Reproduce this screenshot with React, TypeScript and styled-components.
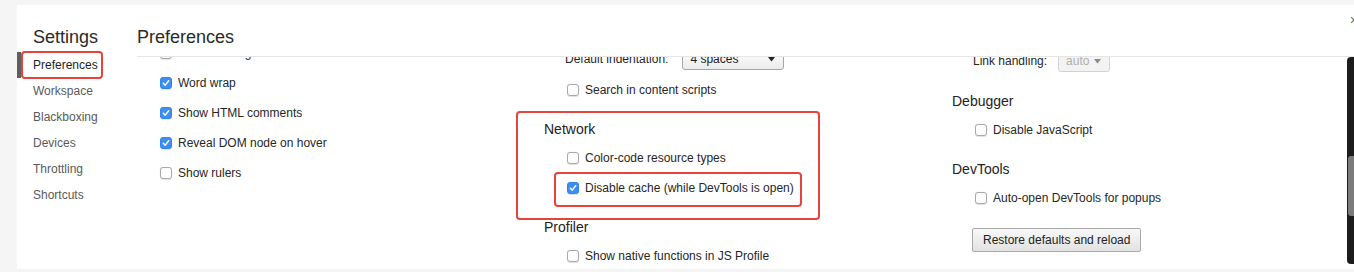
import React from "react";
import styled, { createGlobalStyle, css } from "styled-components";

const GlobalStyle = createGlobalStyle`
  html, body {
    margin: 0;
    padding: 0;
    background: #f5f5f5;
  }
  * {
    box-sizing: border-box;
  }
`;

const SIDEBAR_ITEMS = [
  "Preferences",
  "Workspace",
  "Blackboxing",
  "Devices",
  "Throttling",
  "Shortcuts",
];

type Box = { $top: number; $left: number; $width: number; $height: number };

const Checkbox = ({ checked }: { checked?: boolean }) => (
  <StyledCheck $checked={!!checked}>
    {checked && (
      <svg width="8" height="8" viewBox="0 0 8 8">
        <path
          d="M1.3 4.3 L3.2 6.1 L6.7 1.8"
          fill="none"
          stroke="#fff"
          strokeWidth="1.5"
          strokeLinecap="round"
          strokeLinejoin="round"
        />
      </svg>
    )}
  </StyledCheck>
);

const Option = ({ label, checked }: { label: string; checked?: boolean }) => (
  <StyledRow>
    <Checkbox checked={checked} />
    <span>{label}</span>
  </StyledRow>
);

const Caret = ({ color }: { color: string }) => (
  <svg width="7" height="5" viewBox="0 0 7 5">
    <path d="M0 0 L7 0 L3.5 4.5 Z" fill={color} />
  </svg>
);

const App = () => {
  return (
    <>
      <GlobalStyle />
      <StyledPage>
        <StyledPanel>
          <StyledSidebar>
            <StyledTitle>Settings</StyledTitle>
            <StyledNav>
              {SIDEBAR_ITEMS.map((item, i) => (
                <StyledNavItem key={item} $selected={i === 0}>
                  {item}
                  {i === 0 && (
                    <StyledMark $top={-1} $left={4} $width={82} $height={28} />
                  )}
                </StyledNavItem>
              ))}
            </StyledNav>
          </StyledSidebar>

          <StyledMain>
            <StyledHeader>Preferences</StyledHeader>
            <StyledContent>
              <StyledColumns>
                {/* columns are scrolled: the rows above are cut off */}
                <StyledColumn $shift={-19}>
                  <Option label="Show user agent shadow DOM" />
                  <Option label="Word wrap" checked />
                  <Option label="Show HTML comments" checked />
                  <Option label="Reveal DOM node on hover" checked />
                  <Option label="Show rulers" />
                </StyledColumn>

                <StyledColumn $shift={-14}>
                  <StyledSelectRow>
                    <StyledLabel $gap={14}>Default indentation:</StyledLabel>
                    <StyledSelect $width={102}>
                      4 spaces
                      <Caret color="#222" />
                    </StyledSelect>
                  </StyledSelectRow>
                  <Option label="Search in content scripts" />
                  <StyledSection>
                    <StyledSectionTitle>Network</StyledSectionTitle>
                    <Option label="Color-code resource types" />
                    <StyledMarked>
                      <Option label="Disable cache (while DevTools is open)" checked />
                      <StyledMark $top={-1} $left={10} $width={248} $height={35} />
                    </StyledMarked>
                    <StyledMark $top={-4} $left={-28} $width={304} $height={109} />
                  </StyledSection>
                  <StyledSection>
                    <StyledSectionTitle>Profiler</StyledSectionTitle>
                    <Option label="Show native functions in JS Profile" />
                  </StyledSection>
                </StyledColumn>

                <StyledColumn $shift={-12}>
                  <StyledSelectRow>
                    <StyledLabel $gap={11}>Link handling:</StyledLabel>
                    <StyledSelect $width={52} $disabled>
                      auto
                      <Caret color="#8a8a8a" />
                    </StyledSelect>
                  </StyledSelectRow>
                  <StyledSection>
                    <StyledSectionTitle>Debugger</StyledSectionTitle>
                    <Option label="Disable JavaScript" />
                  </StyledSection>
                  <StyledSection>
                    <StyledSectionTitle>DevTools</StyledSectionTitle>
                    <Option label="Auto-open DevTools for popups" />
                  </StyledSection>
                  <StyledButton>Restore defaults and reload</StyledButton>
                </StyledColumn>
              </StyledColumns>

              <StyledScrollbar>
                <StyledThumb />
              </StyledScrollbar>
            </StyledContent>
          </StyledMain>

          <StyledClose>×</StyledClose>
        </StyledPanel>
      </StyledPage>
    </>
  );
};

export default App;

const StyledPage = styled.div`
  width: 1354px;
  height: 272px;
  padding: 5px 0 3px 17px;
  background: #f5f5f5;
  font-family: "Liberation Sans", Arial, sans-serif;
  color: #222;
  overflow: hidden;
`;

const StyledPanel = styled.div`
  position: relative;
  display: flex;
  height: 264px;
  background: #fff;
  overflow: hidden;
`;

const StyledSidebar = styled.div`
  width: 120px;
  flex-shrink: 0;
  padding-top: 21px;
`;

const StyledTitle = styled.div`
  padding-left: 16px;
  font-size: 18px;
  line-height: 22px;
  color: #2a2a2a;
`;

const StyledNav = styled.div`
  margin-top: 4px;
  display: flex;
  flex-direction: column;
`;

const StyledNavItem = styled.div<{ $selected: boolean }>`
  position: relative;
  height: 26px;
  line-height: 26px;
  padding-left: 16px;
  font-size: 12px;
  color: #5a5a5a;

  ${(p) =>
    p.$selected &&
    css`
      color: #1e1e1e;
      box-shadow: inset 4px 0 #5e5e5e;
    `}
`;

const StyledMark = styled.div<Box>`
  position: absolute;
  top: ${(p) => p.$top}px;
  left: ${(p) => p.$left}px;
  width: ${(p) => p.$width}px;
  height: ${(p) => p.$height}px;
  border: 2px solid #e6433a;
  border-radius: 4px;
  pointer-events: none;
`;

const StyledMain = styled.div`
  flex: 1;
  display: flex;
  flex-direction: column;
  min-width: 0;
`;

const StyledHeader = styled.div`
  height: 52px;
  flex-shrink: 0;
  padding-top: 21px;
  font-size: 18px;
  line-height: 22px;
  color: #2a2a2a;
  border-bottom: 1px solid #e6e6e6;
`;

const StyledContent = styled.div`
  position: relative;
  flex: 1;
  overflow: hidden;
`;

const StyledColumns = styled.div`
  display: grid;
  grid-template-columns: 407px 408px 1fr;
`;

const StyledColumn = styled.div<{ $shift: number }>`
  display: flex;
  flex-direction: column;
  margin-top: ${(p) => p.$shift}px;
`;

const StyledRow = styled.div`
  display: flex;
  align-items: center;
  gap: 6px;
  height: 30px;
  padding-left: 23px;
  font-size: 12px;
  color: #262626;
  white-space: nowrap;
`;

const StyledCheck = styled.span<{ $checked: boolean }>`
  display: inline-flex;
  align-items: center;
  justify-content: center;
  width: 12px;
  height: 12px;
  flex-shrink: 0;
  border-radius: 3px;
  background: ${(p) => (p.$checked ? "#3b8ef3" : "#fff")};
  border: 1px solid ${(p) => (p.$checked ? "#3585e6" : "#a9a9a9")};
  box-shadow: 0 0.5px 1px rgba(0, 0, 0, 0.12);
`;

const StyledSelectRow = styled.div`
  display: flex;
  align-items: center;
  height: 32px;
  padding-left: 21px;
  font-size: 12px;
  white-space: nowrap;
`;

const StyledLabel = styled.span<{ $gap: number }>`
  margin-right: ${(p) => p.$gap}px;
  color: #262626;
`;

const StyledSelect = styled.div<{ $width: number; $disabled?: boolean }>`
  display: flex;
  align-items: center;
  justify-content: space-between;
  width: ${(p) => p.$width}px;
  height: 21px;
  padding: 0 8px 0 7px;
  border: 1px solid ${(p) => (p.$disabled ? "#d2d2d2" : "#a6a6a6")};
  border-radius: 3px;
  font-size: 12px;
  color: ${(p) => (p.$disabled ? "#b0b0b0" : "#222")};
  background: ${(p) =>
    p.$disabled ? "#f3f3f3" : "linear-gradient(#fdfdfd, #ececec)"};
`;

const StyledSection = styled.div`
  position: relative;
  display: flex;
  flex-direction: column;
  margin-top: 10px;
`;

const StyledSectionTitle = styled.div`
  height: 28px;
  line-height: 28px;
  font-size: 14px;
  color: #222;
`;

const StyledMarked = styled.div`
  position: relative;
`;

const StyledButton = styled.button`
  align-self: flex-start;
  margin: 15px 0 0 20px;
  height: 24px;
  padding: 0 10px;
  font-family: "Liberation Sans", Arial, sans-serif;
  font-size: 12px;
  color: #222;
  border: 1px solid #a9a9a9;
  border-radius: 2px;
  background: linear-gradient(#f8f8f8, #e2e2e2);
`;

const StyledScrollbar = styled.div`
  position: absolute;
  top: 0;
  right: 0;
  width: 7px;
  height: 207px;
  background: #1c1c1c;
  border-radius: 4px 0 0 4px;
`;

const StyledThumb = styled.div`
  margin: 99px 0 0 1px;
  height: 60px;
  background: #7b7b7b;
  border-radius: 3px 0 0 3px;
`;

const StyledClose = styled.div`
  position: absolute;
  top: 7px;
  right: -4px;
  font-size: 14px;
  color: #6a6a6a;
`;
